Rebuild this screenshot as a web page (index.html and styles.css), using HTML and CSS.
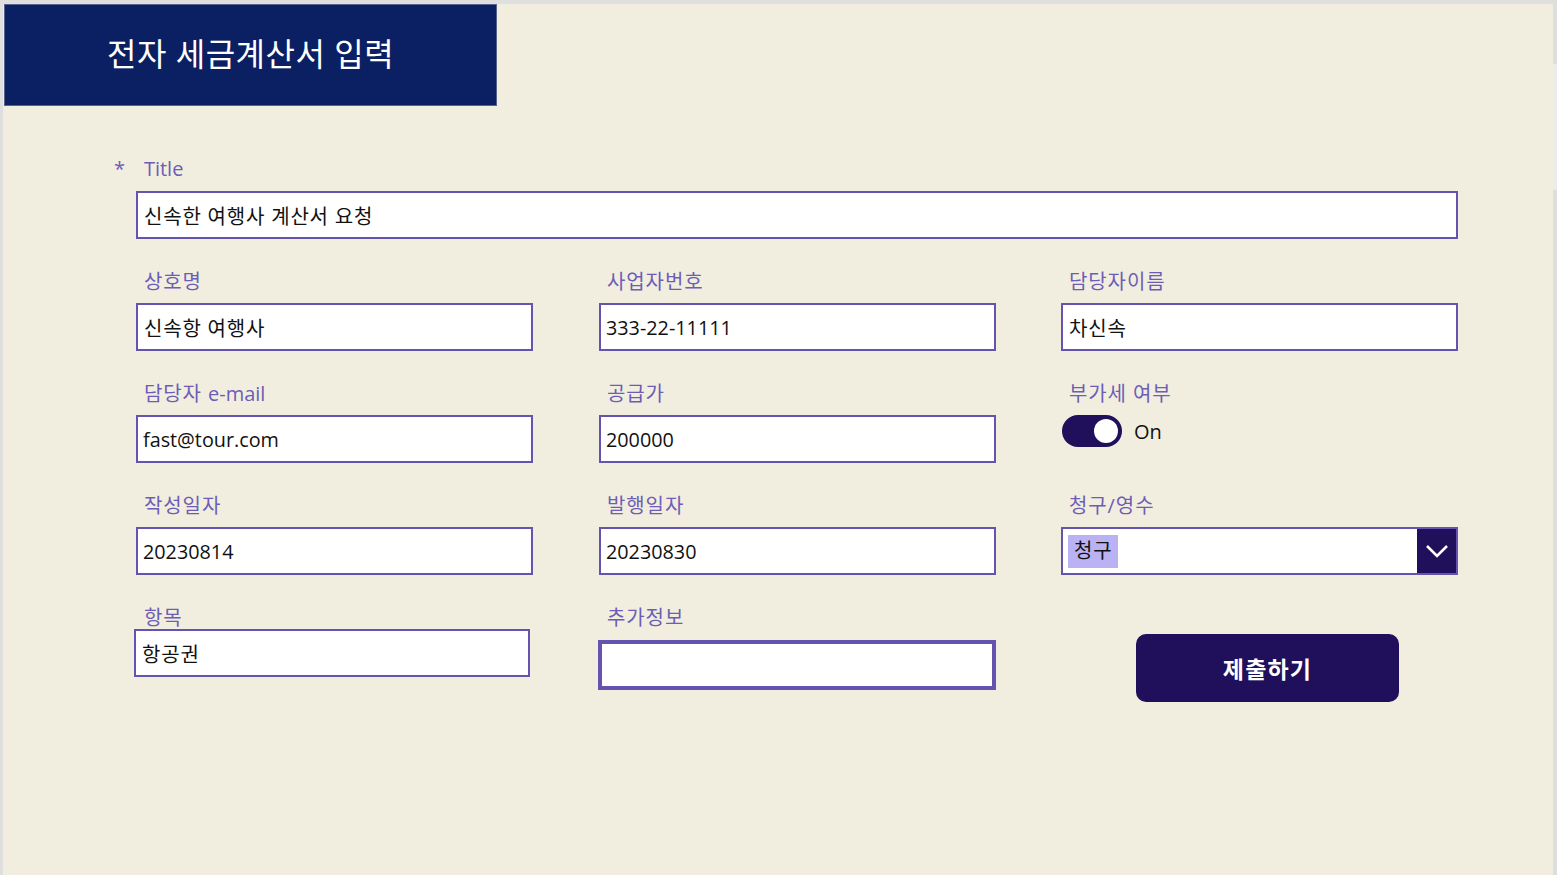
FILE: index.html
```html
<!DOCTYPE html>
<html>
<head>
    <meta charset="utf-8">
    <title>전자 세금계산서 입력</title>
    <link rel="stylesheet" href="styles.css">
</head>
<body>
    <div class="canvas">
        <div class="header">
            <h1>전자 세금계산서 입력</h1>
        </div>

        <div class="form">
            <div class="field-title">
                <label><span class="star">*</span><span class="en">Title</span></label>
                <div class="box">신속한 여행사 계산서 요청</div>
            </div>

            <div class="grid">
                <div class="field">
                    <label>상호명</label>
                    <div class="box">신속항 여행사</div>
                </div>
                <div class="field">
                    <label>사업자번호</label>
                    <div class="box en">333-22-11111</div>
                </div>
                <div class="field">
                    <label>담당자이름</label>
                    <div class="box">차신속</div>
                </div>

                <div class="field">
                    <label>담당자 <span class="en">e-mail</span></label>
                    <div class="box en">fast@tour.com</div>
                </div>
                <div class="field">
                    <label>공급가</label>
                    <div class="box en">200000</div>
                </div>
                <div class="field">
                    <label>부가세 여부</label>
                    <div class="toggle-row">
                        <div class="toggle"><div class="knob"></div></div>
                        <span>On</span>
                    </div>
                </div>

                <div class="field">
                    <label>작성일자</label>
                    <div class="box en">20230814</div>
                </div>
                <div class="field">
                    <label>발행일자</label>
                    <div class="box en">20230830</div>
                </div>
                <div class="field">
                    <label>청구/영수</label>
                    <div class="box dropdown">
                        <span class="chip">청구</span>
                        <div class="chevron">
                            <svg width="24" height="14" viewBox="0 0 24 14"><path d="M2 2 L12 12 L22 2" fill="none" stroke="#fff" stroke-width="2.6"/></svg>
                        </div>
                    </div>
                </div>

                <div class="field last">
                    <label>항목</label>
                    <div class="box item">항공권</div>
                </div>
                <div class="field last">
                    <label>추가정보</label>
                    <div class="box focused"></div>
                </div>
                <div class="field last">
                    <button class="submit">제출하기</button>
                </div>
            </div>
        </div>
    </div>
    <div class="scrollbar"><div class="thumb"></div></div>
</body>
</html>
```

FILE: styles.css
```css
html, body {
    margin: 0;
    height: 100%;
}
body {
    background: #dfdfdf;
    display: flex;
    padding: 4px 0 0 3px;
    box-sizing: border-box;
    font-family: "Open Sans", "Noto Sans CJK KR", sans-serif;
    overflow: hidden;
}
.canvas {
    flex: 1;
    background: #f1eedf;
    height: 871px;
}
.scrollbar {
    width: 4px;
    margin-top: -4px;
    background: #dedede;
    padding-top: 64px;
}
.thumb {
    height: 126px;
    background: #ececec;
}
.header {
    width: 493px;
    height: 102px;
    margin-left: 1px;
    box-sizing: border-box;
    background: #0b2062;
    border: 1px solid #56638c;
    display: flex;
    align-items: center;
    padding: 0 0 6px 102px;
}
.header h1 {
    margin: 0;
    color: #fff;
    font-weight: 400;
    font-size: 32px;
    letter-spacing: 0.5px;
}
.form {
    padding: 51px 0 0 133px;
    width: 1322px;
}
label {
    display: block;
    height: 24px;
    line-height: 24px;
    margin: 0 0 9px 8px;
    color: #6d5db6;
    font-size: 20px;
    letter-spacing: 0.9px;
}
.field-title label {
    display: flex;
    gap: 18px;
    margin: 0 0 10px -22px;
}
.star {
    color: #6d5db6;
}
.box {
    height: 48px;
    box-sizing: border-box;
    background: #fff;
    border: 2px solid #6553b0;
    padding-left: 6px;
    display: flex;
    align-items: center;
    font-size: 20px;
    letter-spacing: 0.8px;
    color: #111;
}
.en,
.box.en {
    letter-spacing: 0;
}
.box.en {
    font-size: 19.8px;
    padding-left: 5px;
}
.grid {
    display: grid;
    grid-template-columns: 463px 462px 397px;
}
.field {
    width: 397px;
    padding-top: 31px;
}
.toggle-row {
    display: flex;
    align-items: center;
    gap: 12px;
    margin: 5px 0 0 1px;
    font-size: 20px;
    color: #111;
}
.toggle {
    width: 60px;
    height: 32px;
    border-radius: 16px;
    background: #200f5a;
    position: relative;
}
.knob {
    position: absolute;
    right: 4px;
    top: 4px;
    width: 24px;
    height: 24px;
    border-radius: 50%;
    background: #fff;
}
.dropdown {
    padding-left: 5px;
    justify-content: space-between;
}
.chip {
    background: #bab2f3;
    padding: 0 6px;
    height: 33px;
    line-height: 31px;
}
.chevron {
    width: 39px;
    height: 44px;
    background: #200f5a;
    display: flex;
    align-items: center;
    justify-content: center;
}
.field.last label {
    margin-bottom: -1px;
}
.item {
    margin-left: -2px;
    width: 396px;
}
.focused {
    margin-top: 11px;
    margin-left: -1px;
    width: 398px;
    height: 50px;
    border-width: 4px;
}
.submit {
    margin: 28px 0 0 75px;
    width: 263px;
    height: 68px;
    border: none;
    border-radius: 10px;
    background: #200f5a;
    color: #fff;
    font-family: "Open Sans", "Noto Sans CJK KR", sans-serif;
    font-size: 23px;
    font-weight: 700;
    letter-spacing: 1.2px;
    padding-bottom: 2px;
}
```
